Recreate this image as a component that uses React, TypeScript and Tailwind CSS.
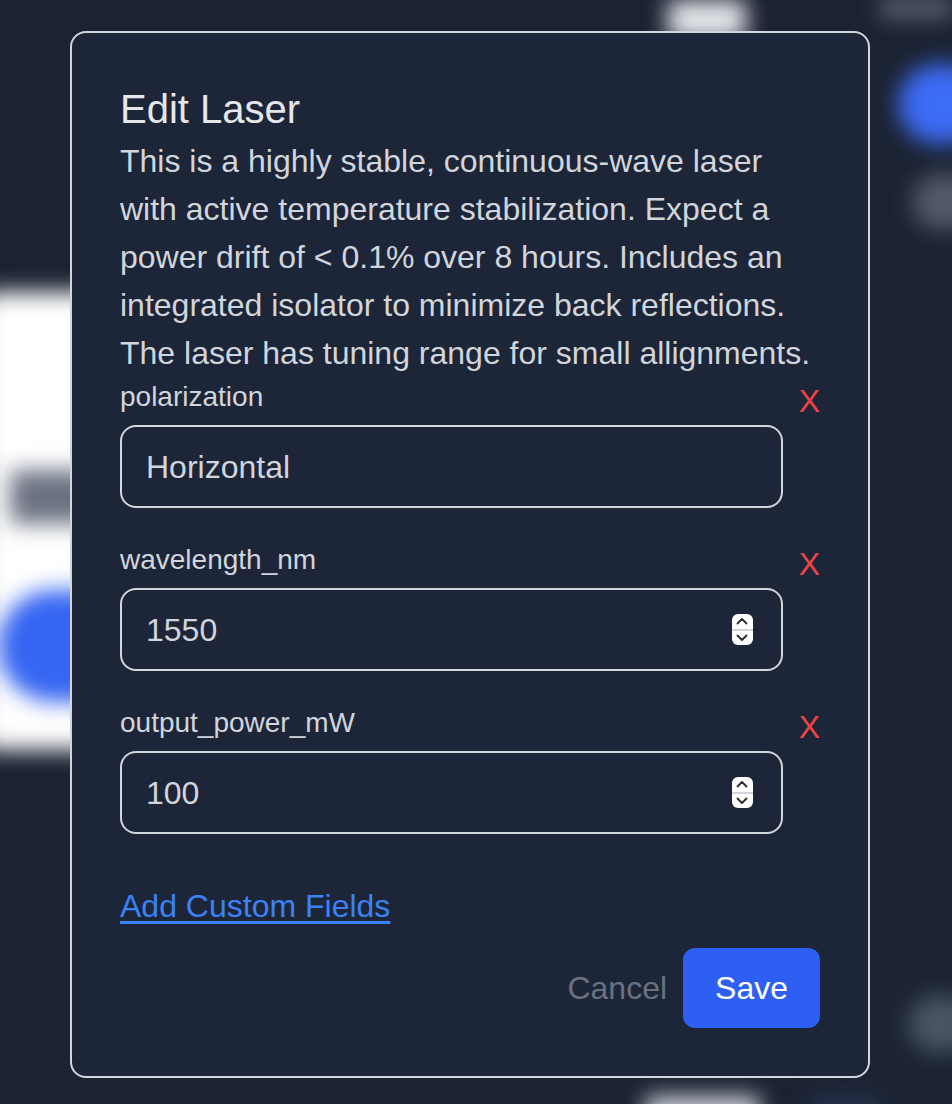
import { useState } from "react";

type Field = {
  key: string;
  value: string;
  numeric?: boolean;
};

const initialFields: Field[] = [
  { key: "polarization", value: "Horizontal" },
  { key: "wavelength_nm", value: "1550", numeric: true },
  { key: "output_power_mW", value: "100", numeric: true },
];

const description =
  "This is a highly stable, continuous-wave laser with active temperature stabilization. Expect a power drift of < 0.1% over 8 hours. Includes an integrated isolator to minimize back reflections. The laser has tuning range for small allignments.";

// 숫자 입력 옆 스피너 (네이티브 대신 직접 그림)
const Spinner = () => (
  <div className="flex h-[31px] w-[21px] shrink-0 flex-col overflow-hidden rounded-[6px] bg-white">
    <div className="flex flex-1 items-center justify-center">
      <svg width="12" height="8" viewBox="0 0 12 8" fill="none">
        <path d="M1.5 6.5L6 2L10.5 6.5" stroke="#2b2b2b" strokeWidth="1.8" strokeLinecap="round" strokeLinejoin="round" />
      </svg>
    </div>
    <div className="h-[2px] bg-gray-300" />
    <div className="flex flex-1 items-center justify-center">
      <svg width="12" height="8" viewBox="0 0 12 8" fill="none">
        <path d="M1.5 1.5L6 6L10.5 1.5" stroke="#2b2b2b" strokeWidth="1.8" strokeLinecap="round" strokeLinejoin="round" />
      </svg>
    </div>
  </div>
);

// 뒤에 깔린 흐릿한 페이지
const BlurredPage = () => (
  <div className="flex flex-col blur-[11px]">
    <div className="flex h-[30px] items-start">
      <div className="ml-[668px] h-[40px] w-[78px] rounded-b-lg bg-gray-200" />
      <div className="ml-auto h-[16px] w-[72px] bg-gray-500" />
    </div>
    <div className="mt-[34px] flex justify-end">
      <div className="mr-[-36px] h-[80px] w-[90px] rounded-full bg-[#3d6cf5]" />
    </div>
    <div className="mt-[30px] flex justify-end">
      <div className="mr-[-24px] h-[56px] w-[64px] rounded-full bg-gray-500/70" />
    </div>
    <div className="mt-[62px] ml-[-20px] flex h-[458px] w-[560px] flex-col rounded-2xl bg-white pt-[178px]">
      <div className="ml-[30px] h-[54px] w-[120px] rounded bg-gray-500" />
      <div className="mt-[66px] ml-[18px] h-[112px] w-[260px] rounded-full bg-[#3565f2]" />
    </div>
    <div className="mt-[246px] flex justify-end">
      <div className="mr-[-24px] h-[56px] w-[68px] rounded-full bg-gray-600" />
    </div>
    <div className="mt-[44px] flex">
      <div className="ml-[645px] h-[60px] w-[115px] rounded-lg bg-gray-300" />
      <div className="ml-[50px] h-[60px] w-[70px] rounded-lg bg-[#27324c]" />
    </div>
  </div>
);

export default function App() {
  const [fields, setFields] = useState<Field[]>(initialFields);

  const updateField = (key: string, value: string) => {
    setFields((prev) => prev.map((f) => (f.key === key ? { ...f, value } : f)));
  };

  const removeField = (key: string) => {
    setFields((prev) => prev.filter((f) => f.key !== key));
  };

  return (
    <div
      className="relative h-[1104px] w-[952px] overflow-hidden bg-[#1b2333]"
      style={{ fontFamily: '"Liberation Sans", Arial, sans-serif' }}
    >
      <BlurredPage />

      {/* 모달 */}
      <div className="absolute inset-0 flex items-start pl-[70px] pt-[31px]">
        <div className="flex w-[800px] flex-col rounded-2xl border-2 border-gray-300 bg-[#1d2638] p-12">
          <h2 className="text-[40px] leading-[56px] text-gray-200">Edit Laser</h2>
          <p className="text-[32px] leading-[48px] text-gray-300">{description}</p>

          {/* 필드 목록 */}
          <div className="flex flex-col gap-8">
            {fields.map((field) => (
              <div key={field.key} className="flex items-start gap-4">
                <div className="flex flex-1 flex-col">
                  <label className="text-[28px] leading-[40px] text-gray-300">{field.key}</label>
                  <div className="mt-2 flex h-[83px] items-center rounded-2xl border-2 border-gray-300 pl-6 pr-7">
                    <input
                      type="text"
                      value={field.value}
                      onChange={(e) => updateField(field.key, e.target.value)}
                      className="min-w-0 flex-1 bg-transparent text-[32px] text-gray-300 outline-none"
                    />
                    {field.numeric && <Spinner />}
                  </div>
                </div>
                <button
                  onClick={() => removeField(field.key)}
                  className="text-[32px] leading-[48px] text-[#ef4444]"
                >
                  X
                </button>
              </div>
            ))}
          </div>

          <div className="mt-12 flex">
            <a href="#" className="text-[32px] leading-[48px] text-[#3b82f6] underline underline-offset-[4px]">
              Add Custom Fields
            </a>
          </div>

          {/* 버튼 */}
          <div className="mt-[18px] flex items-center justify-end gap-4">
            <button className="text-[32px] leading-[48px] text-gray-500">Cancel</button>
            <button className="rounded-xl bg-[#2d5ff2] px-8 py-4 text-[32px] leading-[48px] text-white">
              Save
            </button>
          </div>
        </div>
      </div>
    </div>
  );
}
